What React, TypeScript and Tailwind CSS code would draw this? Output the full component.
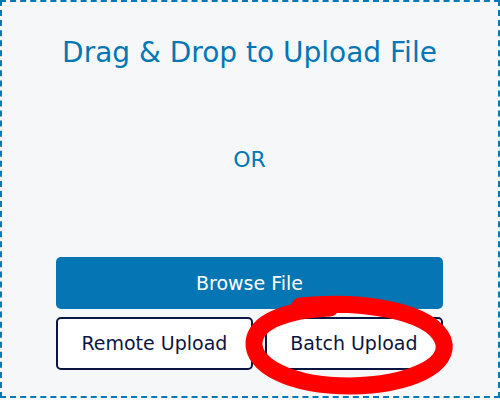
export default function App() {
  return (
    <div className="relative h-[400px] w-[500px] bg-[#f6f7f9]" style={{ fontFamily: '"DejaVu Sans", "Noto Sans", sans-serif' }}>
      <div className="flex h-[398px] w-[500px] flex-col items-center border-2 border-dashed border-[#0778b7] bg-[#f6f7f9] pl-[54px] pr-[55px]">
        <h1 className="mt-[37px] whitespace-nowrap text-[28px] leading-none text-[#0377b6]">
          Drag &amp; Drop to Upload File
        </h1>
        <p className="mt-[82px] text-[22px] leading-none text-[#0377b6]">OR</p>

        <div className="mt-[86px] flex w-full flex-col gap-[8px]">
          <button className="h-[52px] w-full rounded-[5px] bg-[#0575b3] text-[19px] text-white">
            Browse File
          </button>
          <div className="flex gap-[12px]">
            <button className="h-[53px] grow whitespace-nowrap rounded-[5px] border-2 border-[#0b1541] bg-white px-[6px] text-[19px] text-[#0b1541]">
              Remote Upload
            </button>
            <button className="h-[53px] grow whitespace-nowrap rounded-[5px] border-2 border-[#0b1541] bg-white px-[6px] text-[19px] text-[#0b1541]">
              Batch Upload
            </button>
          </div>
        </div>
      </div>

      {/* red marker loop drawn over the batch button */}
      <svg className="pointer-events-none absolute left-0 top-0" width="500" height="400" viewBox="0 0 500 400">
        <path
          d="M300 306 C360 300 430 310 443 340 C452 365 410 385 350 386 C290 386 252 365 254 342 C256 322 285 310 330 308"
          fill="none"
          stroke="#ff0000"
          strokeWidth="17"
          strokeLinecap="round"
          strokeLinejoin="round"
        />
      </svg>
    </div>
  );
}
